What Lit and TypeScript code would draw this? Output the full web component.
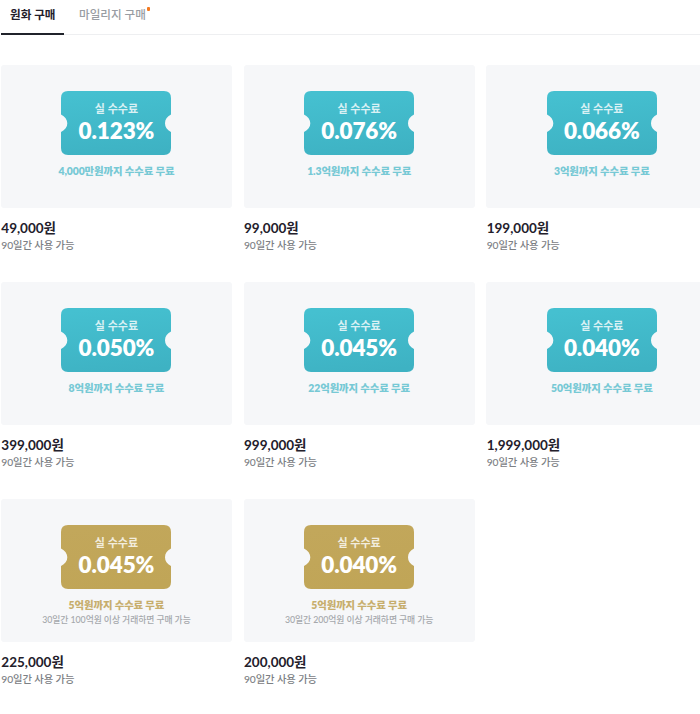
import { css, html, LitElement, nothing } from "lit";
import { customElement, property, state } from "lit/decorators.js";
import { classMap } from "lit/directives/class-map.js";

interface Coupon {
  rate: string;
  limit: string;
  price: string;
  period: string;
  condition?: string;
}

const PERIOD = "90일간 사용 가능";

const COUPONS: Coupon[] = [
  { rate: "0.123%", limit: "4,000만원까지 수수료 무료", price: "49,000원", period: PERIOD },
  { rate: "0.076%", limit: "1.3억원까지 수수료 무료", price: "99,000원", period: PERIOD },
  { rate: "0.066%", limit: "3억원까지 수수료 무료", price: "199,000원", period: PERIOD },
  { rate: "0.050%", limit: "8억원까지 수수료 무료", price: "399,000원", period: PERIOD },
  { rate: "0.045%", limit: "22억원까지 수수료 무료", price: "999,000원", period: PERIOD },
  { rate: "0.040%", limit: "50억원까지 수수료 무료", price: "1,999,000원", period: PERIOD },
  {
    rate: "0.045%",
    limit: "5억원까지 수수료 무료",
    price: "225,000원",
    period: PERIOD,
    condition: "30일간 100억원 이상 거래하면 구매 가능",
  },
  {
    rate: "0.040%",
    limit: "5억원까지 수수료 무료",
    price: "200,000원",
    period: PERIOD,
    condition: "30일간 200억원 이상 거래하면 구매 가능",
  },
];

@customElement("coupon-ticket")
export class CouponTicket extends LitElement {
  @property() rate = "";
  @property({ type: Boolean }) gold = false;

  static override styles = css`
    :host {
      display: grid;
      width: 110px;
      height: 64px;
    }
    svg,
    .label {
      grid-area: 1 / 1;
    }
    .label {
      display: flex;
      flex-direction: column;
      align-items: center;
      padding-top: 10px;
      color: #fff;
      white-space: nowrap;
      z-index: 1;
    }
    .name {
      font-size: 11px;
      font-weight: 700;
      line-height: 16px;
      opacity: 0.8;
    }
    .rate {
      font-size: 22.5px;
      font-weight: 800;
      line-height: 28px;
      letter-spacing: -0.1px;
    }
  `;

  override render() {
    return html`
      <svg width="110" height="64" viewBox="0 0 110 64">
        <defs>
          <linearGradient id="fill" x1="0.4" y1="0" x2="0.6" y2="1">
            <stop offset="0" stop-color=${this.gold ? "#c2a75b" : "#45c0d0"} />
            <stop offset="1" stop-color=${this.gold ? "#c0a557" : "#3eb2c3"} />
          </linearGradient>
        </defs>
        <path
          fill="url(#fill)"
          d="M7 0H103Q110 0 110 7V23.5C106 25.5 104 28.5 104 32.3S106 39 110 41V57Q110 64 103 64H7Q0 64 0 57V41C4 39 6.3 36 6.3 32.3S4 25.5 0 23.5V7Q0 0 7 0Z"
        />
      </svg>
      <div class="label">
        <span class="name">실 수수료</span>
        <span class="rate">${this.rate}</span>
      </div>
    `;
  }
}

@customElement("coupon-card")
export class CouponCard extends LitElement {
  @property({ attribute: false }) coupon!: Coupon;

  static override styles = css`
    :host {
      display: block;
      white-space: nowrap;
    }
    .preview {
      box-sizing: border-box;
      display: flex;
      flex-direction: column;
      align-items: center;
      height: 143px;
      padding-top: 26px;
      border-radius: 3px;
      background: #f6f7f9;
    }
    .limit {
      margin-top: 8px;
      font-size: 10.4px;
      font-weight: 800;
      line-height: 16px;
      letter-spacing: -0.1px;
      color: #77c9d5;
    }
    .limit.gold {
      color: #c7ae6d;
    }
    .condition {
      margin-top: 1px;
      font-size: 8.8px;
      font-weight: 500;
      line-height: 12px;
      letter-spacing: -0.06px;
      color: #a5a8ac;
    }
    .price {
      margin-top: 10px;
      padding-left: 0.3px;
      font-size: 13.5px;
      font-weight: 700;
      line-height: 20px;
      color: #23202b;
    }
    .period {
      padding-left: 0.3px;
      font-size: 10.3px;
      font-weight: 500;
      line-height: 15px;
      letter-spacing: -0.1px;
      color: #7c8084;
    }
  `;

  override render() {
    const { rate, limit, price, period, condition } = this.coupon;
    const gold = condition !== undefined;
    return html`
      <div class="preview">
        <coupon-ticket .rate=${rate} .gold=${gold}></coupon-ticket>
        <div class=${classMap({ limit: true, gold })}>${limit}</div>
        ${condition ? html`<div class="condition">${condition}</div>` : nothing}
      </div>
      <div class="price">${price}</div>
      <div class="period">${period}</div>
    `;
  }
}

@customElement("app-root")
export class AppRoot extends LitElement {
  @state() private tab = 0;

  static override styles = css`
    :host {
      display: block;
      box-sizing: border-box;
      height: 714px;
      padding-left: 1px;
      overflow: hidden;
      background: #fff;
      font-family: Lato, "Noto Sans CJK KR", sans-serif;
    }
    nav {
      box-sizing: border-box;
      display: flex;
      height: 35px;
      gap: 6px;
      border-bottom: 1px solid #eeeff1;
    }
    button {
      position: relative;
      box-sizing: border-box;
      height: 35px;
      padding: 0 8.5px 3px 9px;
      border: 0;
      border-bottom: 2px solid transparent;
      background: none;
      font: 500 11.6px/28px Lato, "Noto Sans CJK KR", sans-serif;
      white-space: nowrap;
      color: #999da3;
      cursor: pointer;
    }
    button.active {
      border-color: #20232b;
      font-weight: 700;
      color: #23202b;
    }
    .dot {
      position: absolute;
      top: 7px;
      right: 4px;
      width: 3px;
      height: 4px;
      border-radius: 1px;
      background: #f47a20;
    }
    main {
      display: grid;
      grid-template-columns: repeat(3, 230.9px);
      gap: 29px 11.8px;
      padding-top: 30px;
    }
    coupon-card {
      height: 188px;
    }
  `;

  private select(index: number): void {
    this.tab = index;
  }

  override render() {
    return html`
      <nav>
        <button
          class=${classMap({ active: this.tab === 0 })}
          @click=${() => {
            this.select(0);
          }}
        >
          원화 구매
        </button>
        <button
          class=${classMap({ active: this.tab === 1 })}
          @click=${() => {
            this.select(1);
          }}
        >
          마일리지 구매<i class="dot"></i>
        </button>
      </nav>
      <main>
        ${COUPONS.map((coupon) => html`<coupon-card .coupon=${coupon}></coupon-card>`)}
      </main>
    `;
  }
}
